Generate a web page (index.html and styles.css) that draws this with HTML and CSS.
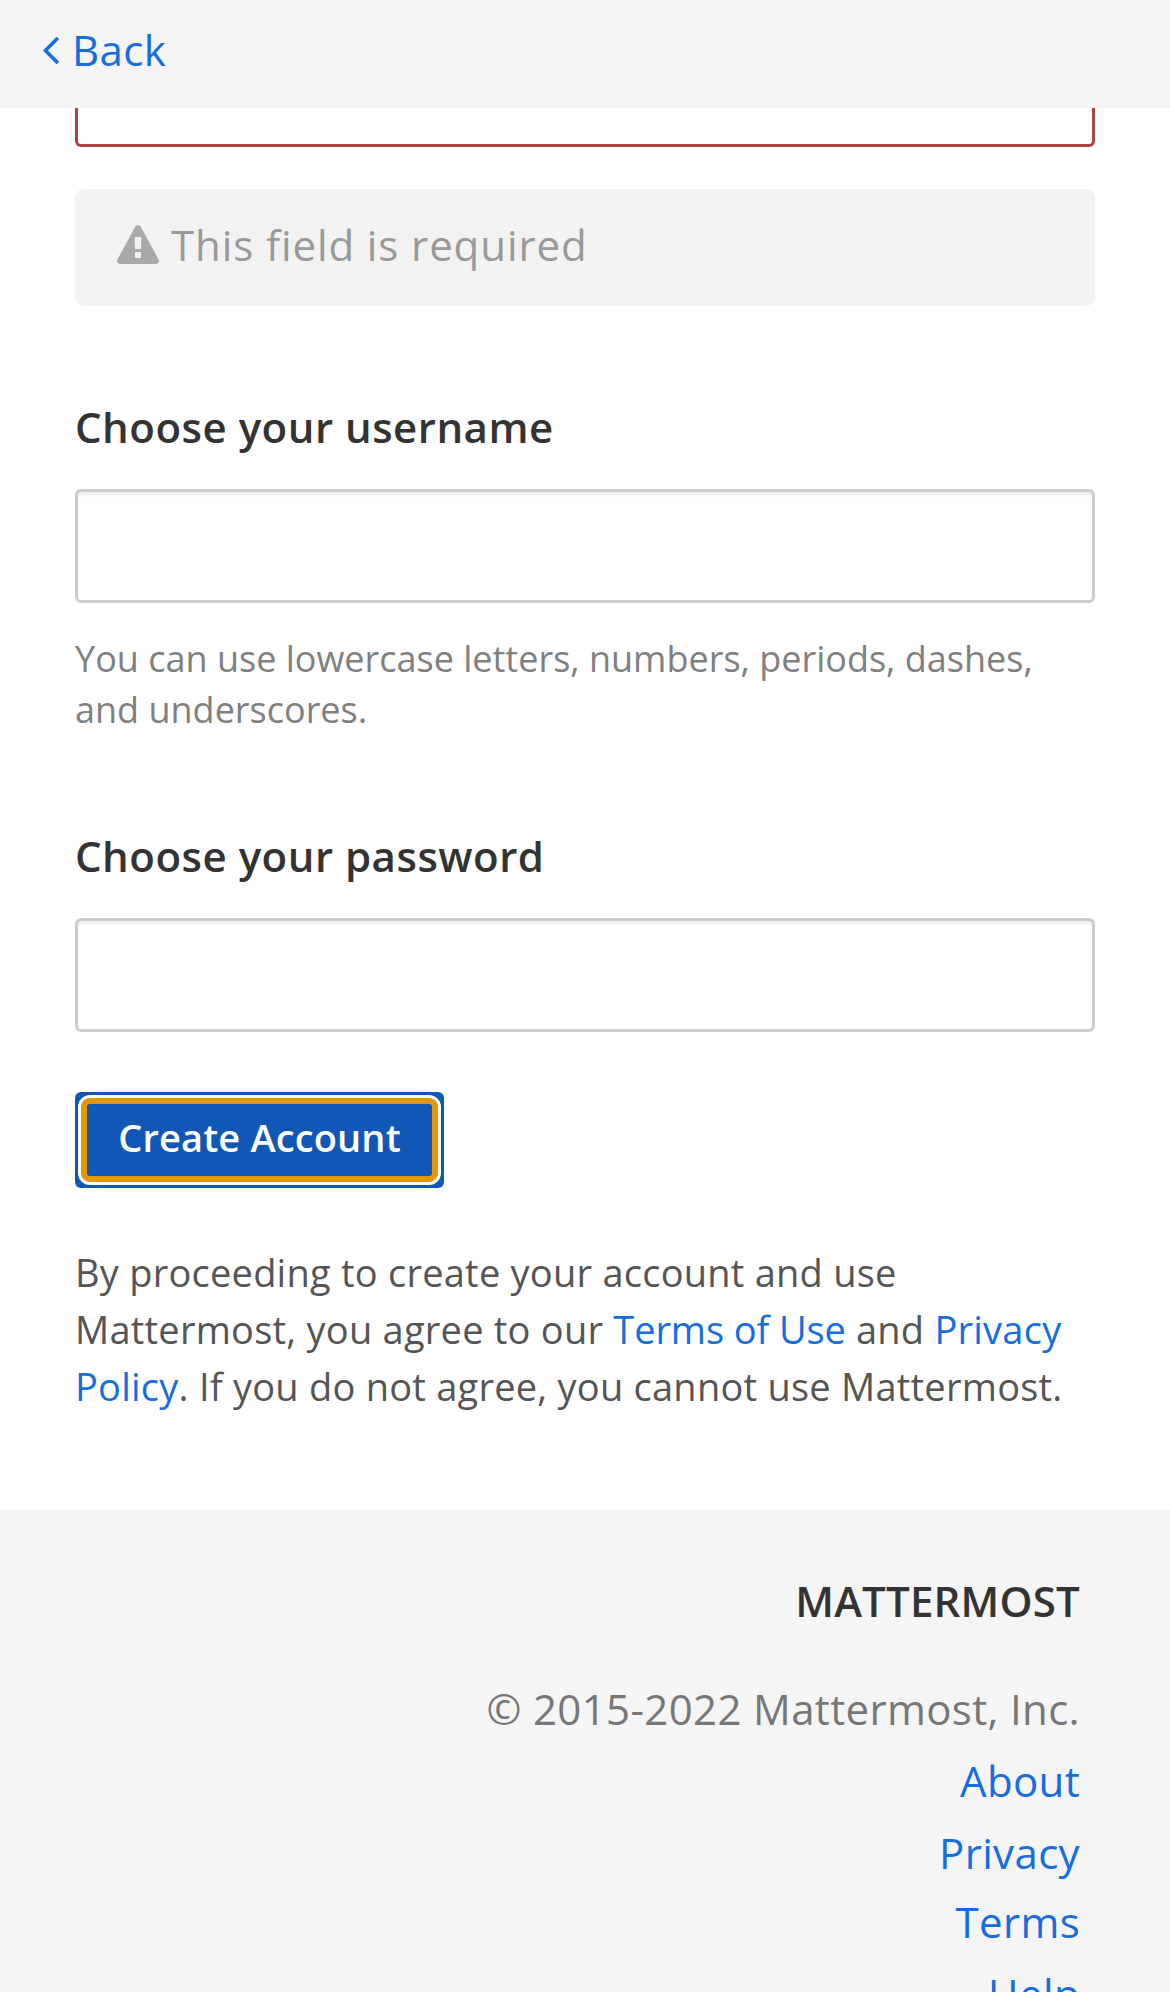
FILE: index.html
```html
<!DOCTYPE html>
<html lang="en">
<head>
<meta charset="utf-8">
<title>Mattermost</title>
<link rel="stylesheet" href="styles.css">
</head>
<body>
<div class="page">
  <header class="topbar">
    <a class="back" href="#">
      <svg class="back-icon" viewBox="621 461 582 998" aria-hidden="true"><path d="M1203 544q0 13-10 23l-393 393 393 393q10 10 10 23t-10 23l-50 50q-10 10-23 10t-23-10l-466-466q-10-10-10-23t10-23l466-466q10-10 23-10t23 10l50 50q10 10 10 23z"/></svg>
      <span>Back</span>
    </a>
  </header>
  <main class="signup">
    <div class="input-tail"></div>
    <div class="error">
      <svg class="error-icon" viewBox="0 0 1792 1664" aria-hidden="true"><path d="M1024 1375v-190q0-14-9.500-23.500t-22.500-9.500h-192q-13 0-22.500 9.500t-9.500 23.500v190q0 14 9.500 23.500t22.500 9.500h192q13 0 22.500-9.500t9.500-23.500zm-2-374l18-459q0-12-10-19-13-11-24-11h-220q-11 0-24 11-10 7-10 21l17 457q0 10 10 16.500t24 6.500h185q14 0 23.500-6.500t10.500-16.500zm-14-934l768 1408q35 63-2 126-17 29-46.500 46t-63.500 17h-1536q-34 0-63.500-17t-46.500-46q-37-63-2-126l768-1408q17-31 47-49t65-18 65 18 47 49z"/></svg>
      <span>This field is required</span>
    </div>
    <label class="label" for="username">Choose your username</label>
    <input class="input" id="username" type="text">
    <p class="help">You can use lowercase letters, numbers, periods, dashes, and underscores.</p>
    <label class="label" for="password">Choose your password</label>
    <input class="input" id="password" type="password">
    <button class="create" type="button"><span class="create-ring">Create Account</span></button>
    <p class="terms">By proceeding to create your account and use Mattermost, you agree to our <a class="tight" href="#">Terms of Use</a> and <a href="#">Privacy Policy</a>. If you do not agree, you cannot use Mattermost.</p>
  </main>
  <footer class="footer">
    <div class="brand">Mattermost</div>
    <div class="copyright">© 2015-2022 Mattermost, Inc.</div>
    <a href="#">About</a>
    <a href="#">Privacy</a>
    <a class="terms-link" href="#">Terms</a>
    <a href="#">Help</a>
  </footer>
</div>
</body>
</html>
```
FILE: styles.css
```css
* { box-sizing: border-box; }
body {
  margin: 0;
  background: #fff;
  color: #333;
  font: 42px/60px "Open Sans", sans-serif;
}
a { color: #166de0; text-decoration: none; }
.page { height: 1992px; overflow: hidden; }

.topbar { height: 108px; background: #f5f5f5; padding-left: 43px; }
.back { display: inline-flex; height: 100px; align-items: center; gap: 13px; line-height: 100px; letter-spacing: .35px; }
.back-icon { width: 16px; height: 27px; fill: currentColor; }

.signup { display: flex; flex-direction: column; align-items: stretch; height: 1401px; padding: 0 75px; }
.input-tail { height: 39px; border: 3px solid #a94442; border-top: 0; border-radius: 0 0 6px 6px; }
.error {
  display: flex;
  align-items: flex-start;
  gap: 12px;
  height: 117px;
  margin: 42px 0 91px;
  padding: 26px 42px 0;
  border-radius: 9px;
  background: #f2f2f2;
  color: #999;
  letter-spacing: .9px;
}
.error-icon { width: 42px; height: 39px; margin-top: 10px; fill: #a9a9a9; }
.label { margin-bottom: 32px; font-weight: 600; letter-spacing: .5px; }
.input {
  width: 100%;
  height: 114px;
  padding: 18px 36px;
  border: 3px solid #ccc;
  border-radius: 6px;
  background: #fff;
  box-shadow: inset 0 3px 3px rgba(0, 0, 0, .075);
  font: inherit;
}
.help { margin: 30px 0 91px; color: #808080; font-size: 36px; line-height: 51px; }
.create {
  align-self: flex-start;
  width: 369px;
  height: 96px;
  margin-top: 60px;
  padding: 3px;
  border: 0;
  border-radius: 6px;
  background: #1157b5;
  color: #fff;
  font: 600 38px/72px "Open Sans", sans-serif;
  letter-spacing: .15px;
}
.create-ring {
  display: block;
  height: 90px;
  border: 3px solid #fff;
  border-radius: 12px;
  box-shadow: inset 0 0 0 6px #e59700;
  line-height: 78px;
}
.terms { margin: 56px 0 0; color: #555; font-size: 38px; line-height: 57px; letter-spacing: .24px; }
.tight { letter-spacing: -.1px; }

.footer {
  display: flex;
  flex-direction: column;
  align-items: flex-end;
  height: 483px;
  padding: 62px 90px 0;
  background: #f5f5f5;
  overflow: hidden;
  letter-spacing: .35px;
}
.brand { margin-bottom: 48px; font-weight: 600; letter-spacing: .2px; text-transform: uppercase; }
.copyright { color: #777; }
.footer a, .copyright { flex: none; margin-bottom: 12px; }
.footer .terms-link { margin-top: -3px; }
```
